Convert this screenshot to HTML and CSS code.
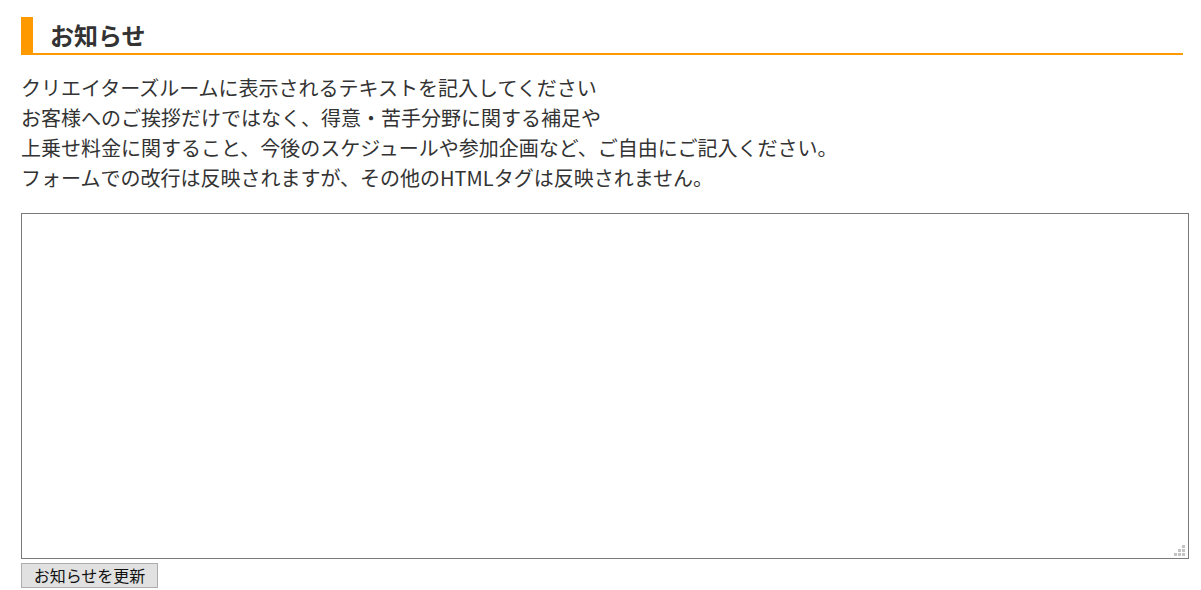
FILE: index.html
```html
<!DOCTYPE html>
<html lang="ja">
<head>
<meta charset="utf-8">
<link rel="stylesheet" href="styles.css">
</head>
<body>
<div class="page">
  <h2 class="title">お知らせ</h2>
  <p class="desc">クリエイターズルームに表示されるテキストを記入してください<br>お客様へのご挨拶だけではなく、得意・苦手分野に関する補足や<br>上乗せ料金に関すること、今後のスケジュールや参加企画など、ご自由にご記入ください。<br>フォームでの改行は反映されますが、その他のHTMLタグは反映されません。</p>
  <div class="field">
    <textarea class="notice"></textarea>
    <svg class="grip" width="12" height="12" viewBox="0 0 12 12" aria-hidden="true">
      <rect x="8" y="0" width="3" height="3" fill="#c4c4c4"/>
      <rect x="4" y="4" width="3" height="3" fill="#c4c4c4"/>
      <rect x="8" y="4" width="3" height="3" fill="#c4c4c4"/>
      <rect x="0" y="8" width="3" height="3" fill="#c4c4c4"/>
      <rect x="4" y="8" width="3" height="3" fill="#c4c4c4"/>
      <rect x="8" y="8" width="3" height="3" fill="#c4c4c4"/>
    </svg>
  </div>
  <button class="btn" type="button">お知らせを更新</button>
</div>
</body>
</html>
```

FILE: styles.css
```css
html, body {
  margin: 0;
  padding: 0;
  background: #fff;
}
body {
  font-family: "Noto Sans CJK JP", "Noto Sans", sans-serif;
  color: #333;
}
.page {
  padding: 17px 18px 0 21px;
}
.title {
  margin: 0;
  height: 36px;
  line-height: 36px;
  border-left: 12px solid #ff9900;
  border-bottom: 2px solid #ff9900;
  padding-left: 17px;
  font-size: 24px;
  font-weight: bold;
  color: #333;
}
.desc {
  margin: 18px 0 20px;
  font-size: 20px;
  line-height: 30px;
}
.field {
  position: relative;
  width: 1168px;
}
.notice {
  display: block;
  box-sizing: border-box;
  width: 1168px;
  height: 346px;
  margin: 0;
  border: 1px solid #7a7a7a;
  resize: none;
  outline: none;
}
.grip {
  position: absolute;
  right: 3px;
  bottom: 2px;
}
.btn {
  display: block;
  margin-top: 4px;
  box-sizing: border-box;
  width: 137px;
  height: 25px;
  padding: 0;
  background: #e1e1e1;
  border: 1px solid #adadad;
  font-family: "Noto Sans CJK JP", sans-serif;
  font-size: 16px;
  line-height: 21px;
  color: #111;
}
```
